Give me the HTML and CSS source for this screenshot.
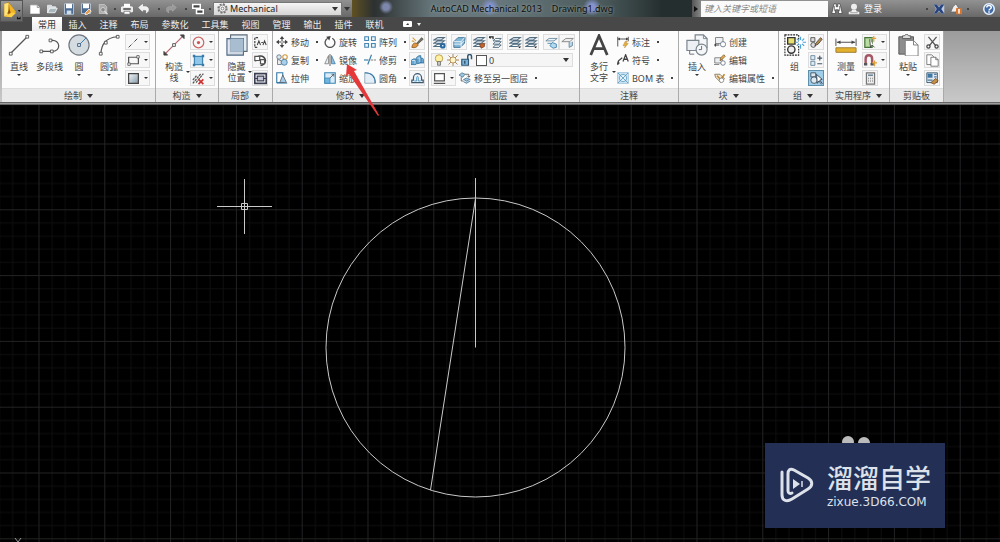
FILE: index.html
```html
<!DOCTYPE html>
<html lang="zh-CN">
<head>
<meta charset="utf-8">
<title>AutoCAD Mechanical 2013 - Drawing1.dwg</title>
<link rel="stylesheet" href="styles.css">
</head>
<body>
<svg class="sprite" aria-hidden="true">
  <symbol id="new" viewBox="0 0 16 16"><path d="M2 3h9l3 3v8H2z" fill="#fff" stroke="#ddd"/><path d="M11 3v3h3" fill="none" stroke="#777"/></symbol>
  <symbol id="open" viewBox="0 0 16 16"><path d="M2 13V3h5l2 2h4v2" fill="#d8dde0" stroke="#eee"/><path d="M2 13l3-6h10l-3 6z" fill="#a8b8bd" stroke="#fff"/></symbol>
  <symbol id="save" viewBox="0 0 16 16"><path d="M2 1h12v14H2z" fill="#496b94" stroke="#c8d8e8"/><path d="M4 1h8v6H4z" fill="#fff"/><path d="M5 10h6v5H5z" fill="#cfdcea"/></symbol>
  <symbol id="saveas" viewBox="0 0 16 16"><path d="M2 1h12v13H2z" fill="#496b94" stroke="#c8d8e8"/><path d="M4 1h8v6H4z" fill="#fff"/><path d="M7 13l5-5 3 3-5 4-3 1z" fill="#e59b4b" stroke="#fff"/></symbol>
  <symbol id="plot" viewBox="0 0 16 16"><path d="M3 2h7l3 3v9H3z" fill="#aaa" stroke="#ccc"/><circle cx="8" cy="9" r="3" fill="#888" stroke="#ddd"/><path d="M10 11l4 4" stroke="#ddd" stroke-width="2"/></symbol>
  <symbol id="print" viewBox="0 0 16 16"><path d="M4 1h8v5H4z" fill="#fff"/><rect x="0" y="5" width="16" height="7" rx="2" fill="#e8e8e8" stroke="#fff"/><path d="M3 8h10" stroke="#444" stroke-width="2"/><path d="M4 11h8v4H4z" fill="#fff" stroke="#666"/></symbol>
  <symbol id="undo" viewBox="0 0 16 16"><path d="M1 6l5-4v3h4c5 0 5 7 1 8 1-3 0-4-2-4H6v2z" fill="#eee" stroke="#fff"/></symbol>
  <symbol id="redo" viewBox="0 0 16 16"><path d="M15 6l-5-4v3H6c-5 0-5 7-1 8-1-3 0-4 2-4h3v2z" fill="#999" stroke="#aaa"/></symbol>
  <symbol id="win" viewBox="0 0 16 16"><path d="M1 2h10v5H1zM6 9h9v5H6z" fill="#444" stroke="#fff" stroke-width="2"/></symbol>
  <symbol id="gear" viewBox="0 0 16 16"><circle cx="8" cy="8" r="6" fill="none" stroke="#777" stroke-width="3" stroke-dasharray="2.700 2"/><circle cx="8" cy="8" r="5" fill="#f4f4f4" stroke="#666"/><circle cx="8" cy="8" r="2" fill="#fff" stroke="#555"/></symbol>
  <symbol id="binoc" viewBox="0 0 16 16"><path d="M4 1h3v4h2V1h3l3 13h-5V9H6v5H1z" fill="#fff" stroke="#444"/><path d="M4.500 4v7M11.500 4v7" stroke="#555"/></symbol>
  <symbol id="user" viewBox="0 0 16 16"><circle cx="8" cy="5" r="4" fill="#eee"/><path d="M5 9v2l-4 1v3h14v-3l-4-1V9z" fill="#eee"/><path d="M3 13h10" stroke="#888"/></symbol>
  <symbol id="exch" viewBox="0 0 16 16"><path d="M1 2h4l3 3 3-3h4v12h-4l-3-3-3 3H1l3-6z" fill="#b6c8e3"/><path d="M1 2h4l3 4 3-4h4l-4 6 4 6h-4l-3-4-3 4H1l4-6z" fill="#29437d"/></symbol>
  <symbol id="a360" viewBox="0 0 16 16"><path d="M1 12l3-7 4-4 3 5-3 6z" fill="#eee" stroke="#666"/><rect x="8" y="7" width="8" height="8" fill="#d8762f"/><path d="M12 8v6" stroke="#fff" stroke-width="2"/></symbol>
  <symbol id="help" viewBox="0 0 16 16"><circle cx="8" cy="8" r="7" fill="#416ba6" stroke="#e8f2ff" stroke-width="2"/><path d="M5 6c0-4 6-3 6 0 0 2-3 2-3 4M8 11v2" fill="none" stroke="#fff" stroke-width="2"/></symbol>

  <symbol id="line" viewBox="0 0 24 24"><path d="M3 21L21 3" stroke="#555" stroke-width="1.3"/><path d="M1.500 20h3v3h-3zM19.500 1.500h3v3h-3z" fill="#fff" stroke="#555"/></symbol>
  <symbol id="pline" viewBox="0 0 24 24"><path d="M2 19h12c11 0 9-13 0-12" fill="none" stroke="#555" stroke-width="1.300"/><path d="M1 17.500h3v3H1zM12.500 17.500h3v3h-3zM11 5.500h3v3h-3z" fill="#fff" stroke="#555"/></symbol>
  <symbol id="circle" viewBox="0 0 24 24"><circle cx="12" cy="12" r="11" fill="#d5dce1" stroke="#707780" stroke-width="1.300"/><path d="M12 12l8-8" stroke="#2f78b3"/><path d="M10.500 10.500h3v3h-3z" fill="#fff" stroke="#357"/></symbol>
  <symbol id="arc" viewBox="0 0 24 24"><path d="M3 22C4 10 9 4 21 3" fill="none" stroke="#555" stroke-width="1.300"/><path d="M1.500 20h3v3h-3zM7 8h3v3H7zM20 1.500h3v3h-3z" fill="#fff" stroke="#555"/></symbol>
  <symbol id="cline" viewBox="0 0 24 24"><path d="M2 22L22 2" stroke="#b56a70" stroke-width="1.400"/><path d="M1 19v4h4zM19 1h4v4z" fill="#444" stroke="#444"/><path d="M10.500 10.500h3v3h-3z" fill="#fff" stroke="#555"/></symbol>
  <symbol id="hide" viewBox="0 0 24 24"><path d="M5 1h18v18H5z" fill="#e4ecf3" stroke="#5c6b78" stroke-width="1.200"/><path d="M1 5h18v18H1z" fill="#bccbd8" fill-opacity=".7" stroke="#4e6780" stroke-width="1.200"/><path d="M5 5h14v14H5z" fill="#a8bed0"/><path d="M3 21V7" stroke="#eef"/></symbol>
  <symbol id="bigA" viewBox="0 0 24 24"><path d="M3 23L12 2l9 21M6 16h12" fill="none" stroke="#444" stroke-width="3"/></symbol>
  <symbol id="insert" viewBox="0 0 24 24"><path d="M10 1h9l4 4v10H10z" fill="#f4f6f8" stroke="#7b858d" stroke-width="1.300"/><path d="M19 1v4h4" fill="none" stroke="#7b858d"/><path d="M1 7h13v11H1z" fill="#edf0f2" stroke="#7b858d" stroke-width="1.300"/><circle cx="17" cy="17" r="6" fill="#f4f6f8" stroke="#7b858d" stroke-width="1.300"/><path d="M17 13v4h-3M4 18v4h5" fill="none" stroke="#667"/></symbol>
  <symbol id="group" viewBox="0 0 24 24"><path d="M1 1h15v22H1z" fill="#fff" stroke="#222" stroke-width="1.200" stroke-dasharray="2 1"/><path d="M4 4h8v7H4z" fill="#e7df70" stroke="#333" stroke-width="1.500"/><circle cx="8" cy="17" r="4" fill="#eee" stroke="#333" stroke-width="1.500"/><path d="M18 3v13M12 9h12M14 5l8 8M22 5l-8 8" stroke="#4aa3dd" stroke-width="1.300"/><circle cx="18" cy="9" r="2.500" fill="#fff"/></symbol>
  <symbol id="measure" viewBox="0 0 24 24"><path d="M1 5v8M23 5v8M2 9h20" stroke="#444" fill="none"/><path d="M2 9l4-2v4zM22 9l-4-2v4z" fill="#444"/><path d="M1 15h22v5H1z" fill="#e4b12d" stroke="#9a7a30"/></symbol>
  <symbol id="paste" viewBox="0 0 24 24"><path d="M2 3h16v19H2z" fill="#8d8d8d" stroke="#555"/><path d="M6 4V2h2c1-2 4-2 5 0h2v3H6z" fill="#ddd" stroke="#555"/><path d="M9 7h9l5 5v12H9z" fill="#fff" stroke="#777"/><path d="M18 7v5h5" fill="none" stroke="#777"/></symbol>

  <symbol id="dash" viewBox="0 0 16 16"><path d="M2 14L14 2" stroke="#444" stroke-width="1.200" stroke-dasharray="5 2 1 2"/></symbol>
  <symbol id="rect" viewBox="0 0 16 16"><path d="M2 4h12v8H2z" fill="none" stroke="#555" stroke-width="1.500"/><path d="M1 11h3v3H1zM12 2h3v3h-3z" fill="#fff" stroke="#555"/></symbol>
  <symbol id="hatch" viewBox="0 0 16 16"><linearGradient id="hg" x2="1" y2="1"><stop stop-color="#f7fafc"/><stop offset="1" stop-color="#8398a8"/></linearGradient><path d="M2 2h12v12H2z" fill="url(#hg)" stroke="#444" stroke-width="1.500"/></symbol>
  <symbol id="ccirc" viewBox="0 0 16 16"><circle cx="8" cy="8" r="6.500" fill="none" stroke="#c66" stroke-width="1.500"/><circle cx="8" cy="8" r="2" fill="#c55"/></symbol>
  <symbol id="cbox" viewBox="0 0 16 16"><path d="M3 3h10v10H3z" fill="#8fc7ea" stroke="#4486b0" stroke-width="1.500"/><path d="M1 1h3v3H1zM12 1h3v3h-3zM1 12h3v3H1zM12 12h3v3h-3z" fill="#357aa8"/></symbol>
  <symbol id="cdel" viewBox="0 0 16 16"><path d="M1 14L11 2M5 13l9-11M1 10l5-6" stroke="#555" stroke-width="1.500" stroke-dasharray="3 1"/><path d="M8 9l6 6M14 9l-6 6" stroke="#c33" stroke-width="2"/></symbol>
  <symbol id="loc1" viewBox="0 0 16 16"><path d="M5 2H1v12h4" fill="none" stroke="#444" stroke-width="1.500" stroke-dasharray="3 1"/><path d="M4 11l2-5 2 5M9 8h2M11 11l2-5 2 5" fill="none" stroke="#444" stroke-width="1.300"/></symbol>
  <symbol id="loc2" viewBox="0 0 16 16"><path d="M2 9a6 6 0 1 1 12-1 6 6 0 0 1-6 6" fill="none" stroke="#444" stroke-width="2"/><path d="M1 3h6v5H1zM8 7h5v5H8z" fill="#fff" stroke="#555" stroke-width="1.500"/></symbol>
  <symbol id="loc3" viewBox="0 0 16 16"><path d="M1 2h14v12H1z" fill="#fff" stroke="#3d4052" stroke-width="2"/><path d="M4 5h8v6H4zM1 8h4M11 8h4" fill="#c8c8d8" stroke="#3d4052" stroke-width="1.500"/></symbol>
  <symbol id="move" viewBox="0 0 16 16"><path d="M8 2v12M2 8h12" stroke="#444" stroke-width="1.500"/><path d="M8 0l3 4H5zM8 16l3-4H5zM0 8l4-3v6zM16 8l-4-3v6z" fill="#444"/><path d="M7 7h2v2H7z" fill="#fff"/></symbol>
  <symbol id="copy" viewBox="0 0 16 16"><circle cx="4" cy="4" r="3" fill="#dbe8f2" stroke="#567"/><circle cx="12" cy="4" r="3" fill="#fff" stroke="#d39a3c" stroke-width="1.500"/><path d="M2 7v7h5V9z" fill="#eee" stroke="#567"/><circle cx="11" cy="11" r="4" fill="#a9cfe9" stroke="#37729e"/></symbol>
  <symbol id="stretch" viewBox="0 0 16 16"><path d="M1 1h8v13H1z" fill="#fff" stroke="#357aa8" stroke-width="1.500"/><path d="M9 4l5 10H5z" fill="#9fcbe8" stroke="#555"/><path d="M1 15h14" stroke="#357aa8"/></symbol>
  <symbol id="rotate" viewBox="0 0 16 16"><path d="M5 3a6.500 6.500 0 1 0 6 0" fill="none" stroke="#555" stroke-width="1.800"/><path d="M3 1l6-1-2 6z" fill="#444"/></symbol>
  <symbol id="mirror" viewBox="0 0 16 16"><path d="M6 2v11H1z" fill="#e9edf0" stroke="#777"/><path d="M10 2v11h5z" fill="#8fbddc" stroke="#357aa8"/><path d="M8 0v16" stroke="#333"/></symbol>
  <symbol id="scale" viewBox="0 0 16 16"><path d="M1 1h14v14H1z" fill="#d9ecf8" stroke="#3d85b6" stroke-width="1.500"/><path d="M1 8h7v7H1z" fill="#74b5df" stroke="#3d85b6"/><path d="M8 8l5-5M10 3h3v3" fill="none" stroke="#444"/></symbol>
  <symbol id="array" viewBox="0 0 16 16"><path d="M1 1h5v5H1zM10 1h5v5h-5zM1 10h5v5H1zM10 10h5v5h-5z" fill="#eaf5fc" stroke="#4886b2" stroke-width="1.500"/></symbol>
  <symbol id="trim" viewBox="0 0 16 16"><path d="M5 14l5-13" stroke="#357aa8" stroke-width="1.500"/><path d="M0 8h6" stroke="#357aa8" stroke-width="1.500"/><path d="M9 8h7" stroke="#555" stroke-dasharray="3 1"/></symbol>
  <symbol id="fillet" viewBox="0 0 16 16"><path d="M1 15V1c9 0 14 5 14 14z" fill="#e3eef6" stroke="#8298a8"/><path d="M1 1c9 0 14 5 14 14" fill="none" stroke="#357aa8" stroke-width="1.500"/></symbol>
  <symbol id="brush" viewBox="0 0 16 16"><path d="M7 9l6-7 2 2-7 6z" fill="#77706a" stroke="#554"/><path d="M1 14c1-5 3-6 6-5l2 2c-2 3-4 4-8 3z" fill="#dd973f" stroke="#8b5928"/><path d="M2 2l4 4M1 6l3 1" stroke="#d7a34b" stroke-width="1.500"/></symbol>
  <symbol id="cloud" viewBox="0 0 16 16"><path d="M0 13V8l3-2h3v7zM7 12V4l3-2h2v9zM12 11V5h2l2 2v4z" fill="#68a8d4" stroke="#2e719f"/><path d="M1 8h4v4M8 5h3v5" fill="none" stroke="#d8effc"/></symbol>
  <symbol id="offset" viewBox="0 0 16 16"><path d="M1 13h14v-3h-2V7a5 5 0 0 0-10 0v3H1z" fill="#edf5fa" stroke="#405b70" stroke-width="1.500"/><path d="M4 11h3V7c0-2 2-2 2 0v4h3" fill="none" stroke="#3b89b7"/></symbol>
  <symbol id="layer" viewBox="0 0 16 16"><path d="M1 13l5-3h8l-4 3zM1 9l5-3h8l-4 3zM1 5l5-3h8l-4 3z" fill="#f6fbff" stroke="#536d80" stroke-width="1.300"/></symbol>
  <symbol id="layerg" viewBox="0 0 16 16"><use href="#layer"/><circle cx="12" cy="12" r="3.500" fill="#2769a0"/><circle cx="12" cy="12" r="1" fill="#fff"/></symbol>
  <symbol id="layerb" viewBox="0 0 16 16"><path d="M1 14V7l5-5h9l-1 7-5 5z" fill="#82b6d7" stroke="#32698b"/><path d="M1 7h9l4-5M1 10h9l4-4M10 7v7" fill="none" stroke="#fff"/></symbol>
  <symbol id="layero" viewBox="0 0 16 16"><use href="#layer"/><path d="M8 10l6-1v4l-4 2z" fill="#c4622d" stroke="#854523"/></symbol>
  <symbol id="layerp" viewBox="0 0 16 16"><path d="M5 14l3-3h7l-3 3zM5 10l3-3h7l-3 3zM5 6l3-3h7l-3 3z" fill="#f6fbff" stroke="#536d80" stroke-width="1.200"/><path d="M0 1h5v3M0 1l2 2" fill="none" stroke="#222" stroke-width="1.500"/></symbol>
  <symbol id="layerm" viewBox="0 0 16 16"><use href="#layer"/><path d="M11 13h4l-2 2z" fill="#222"/></symbol>
  <symbol id="layerf" viewBox="0 0 16 16"><path d="M1 6l4-3h10l-4 3z" fill="#eaf5fb" stroke="#5e8098"/><path d="M3 9h5M9 8l5 2v4l-4 1-4-3z" fill="#b4daee" stroke="#357aa8"/></symbol>
  <symbol id="layert" viewBox="0 0 16 16"><path d="M1 7l5-4h9l-4 4z" fill="#eee" stroke="#777"/><path d="M10 7v7l4-2V7" fill="#bed8e7" stroke="#5a7e95"/></symbol>
  <symbol id="bulb" viewBox="0 0 16 16"><circle cx="8" cy="6" r="5" fill="#fff0a2" stroke="#a78a38"/><path d="M6 10h4v5H6z" fill="#c9c9bd" stroke="#666"/></symbol>
  <symbol id="sun" viewBox="0 0 16 16"><path d="M8 0v16M0 8h16M2 2l12 12M14 2L2 14" stroke="#a4804a" stroke-width="1.200"/><circle cx="8" cy="8" r="4" fill="#fff4c7" stroke="#a4804a"/></symbol>
  <symbol id="lock" viewBox="0 0 16 16"><path d="M1 7h9v8H1z" fill="#7fb3da" stroke="#315875" stroke-width="1.500"/><path d="M9 7V3c0-3 5-3 5 0v4" fill="none" stroke="#315875" stroke-width="2"/><path d="M5 9v4" stroke="#315875" stroke-width="2"/></symbol>
  <symbol id="shape" viewBox="0 0 16 16"><path d="M2 2h12v9H2z" fill="#fff" stroke="#555" stroke-width="1.500"/><path d="M1 14h14" stroke="#555" stroke-width="1.500"/></symbol>
  <symbol id="tolayer" viewBox="0 0 16 16"><path d="M0 4l4-3 4 2-3 4zM6 10l4-2 5 2-5 2zM6 13l4 2 5-3" fill="#98c7e5" stroke="#4d7085"/><path d="M8 3h5v4M11 5l2 2 2-2M3 7v5h3" fill="none" stroke="#444"/></symbol>
  <symbol id="dim" viewBox="0 0 16 16"><path d="M1 1v13M15 1v6M1 4h14" fill="none" stroke="#555" stroke-width="1.300"/><path d="M1 4l3-2v4zM15 4l-3-2v4z" fill="#444"/><path d="M11 7l-3 6h3l-1 3 5-6h-3l2-3z" fill="#e7af39" stroke="#aa7524" stroke-width=".5"/></symbol>
  <symbol id="sym" viewBox="0 0 16 16"><path d="M1 14l1-5 5-4M8 10l3.500-9L15 10M9 7h5" fill="none" stroke="#444" stroke-width="1.700"/><path d="M0 15l1-5 3 2z" fill="#444"/></symbol>
  <symbol id="bom" viewBox="0 0 16 16"><path d="M1 1h14v14H1z" fill="#e3f1fa" stroke="#79aecd"/><circle cx="8" cy="8" r="5" fill="none" stroke="#4c91bc"/><path d="M1 1l14 14M15 1L1 15" stroke="#4c91bc"/></symbol>
  <symbol id="bcreate" viewBox="0 0 16 16"><path d="M2 2h10v8H2z" fill="#eef1f3" stroke="#666"/><path d="M0 12h7M2 10v4" stroke="#444" stroke-width="1.500"/><circle cx="12" cy="11" r="3.500" fill="#fff" stroke="#567"/></symbol>
  <symbol id="bedit" viewBox="0 0 16 16"><path d="M1 5h10v7H1zM0 14h7" fill="#edf0f2" stroke="#666"/><circle cx="12" cy="12" r="3" fill="#fff" stroke="#567"/><path d="M8 9l1-4 4-4 2 2-4 4z" fill="#e4ae52" stroke="#80551c"/></symbol>
  <symbol id="battr" viewBox="0 0 16 16"><path d="M1 3h7l6 6-5 5-7-7z" fill="#ece7d5" stroke="#75643c"/><path d="M4 5l5 5 5-7" fill="none" stroke="#c1832d" stroke-width="2"/><circle cx="10" cy="11" r="3" fill="#fff" stroke="#777"/></symbol>
  <symbol id="gedit" viewBox="0 0 16 16"><path d="M1 2h5v5H1z" fill="#ddd" stroke="#444"/><circle cx="4" cy="11" r="3" fill="#ddd" stroke="#444"/><path d="M7 9l6-7 2 2-5 6-4 2z" fill="#b58c4e" stroke="#444"/></symbol>
  <symbol id="gadd" viewBox="0 0 16 16"><path d="M1 2h5v5H1zM1 9h5v5H1z" fill="#dceaf3" stroke="#5f7d92"/><path d="M9 5h6M12 2v6M9 12h6" stroke="#456" stroke-width="1.500"/></symbol>
  <symbol id="gsel" viewBox="0 0 16 16"><path d="M1 1h6v5H1z" fill="#dce8ed" stroke="#345"/><circle cx="5" cy="10" r="4" fill="#dce8ed" stroke="#345"/><path d="M8 3l1 11 2-3 3 4 1-1-3-4 3-1z" fill="#fff" stroke="#234"/></symbol>
  <symbol id="qsel" viewBox="0 0 16 16"><path d="M1 2h9v12H1z" fill="#b9dda0" stroke="#49723a" stroke-width="1.500"/><path d="M7 4l1 10 2-3 3 3" fill="#fff" stroke="#333"/><path d="M12 0v7M9 3h6" stroke="#e0a33d" stroke-width="1.500"/></symbol>
  <symbol id="magnet" viewBox="0 0 16 16"><path d="M2 12V6c0-6 8-6 8 0v6" fill="none" stroke="#a45765" stroke-width="3"/><path d="M0 11h4v3H0zM8 11h4v3H8z" fill="#555"/><path d="M13 8v7M10 11h6" stroke="#dda43d" stroke-width="1.500"/></symbol>
  <symbol id="calc" viewBox="0 0 16 16"><path d="M3 1h10v14H3z" fill="#eee" stroke="#777" stroke-width="1.500"/><path d="M5 4h6" stroke="#6b8799" stroke-width="2"/><path d="M5 8h6M5 11h6" stroke="#888" stroke-width="2" stroke-dasharray="1 1.500"/></symbol>
  <symbol id="cut" viewBox="0 0 16 16"><path d="M3 1l9 11M13 1L4 12" stroke="#555" stroke-width="1.500"/><circle cx="3" cy="13" r="2" fill="none" stroke="#444" stroke-width="1.500"/><circle cx="13" cy="13" r="2" fill="none" stroke="#444" stroke-width="1.500"/></symbol>
  <symbol id="copyc" viewBox="0 0 16 16"><path d="M1 1h6l3 3v9H1z" fill="#fff" stroke="#666"/><path d="M6 4h6l3 3v8H6z" fill="#fff" stroke="#666"/><path d="M12 4v3h3" fill="none" stroke="#666"/></symbol>
  <symbol id="match" viewBox="0 0 16 16"><path d="M1 1h13v12H1z" fill="#dfe8ef" stroke="#27465f"/><path d="M2 2h6v5H2z" fill="#3e76a6"/><path d="M10 3h3M10 6h3M2 10h6" stroke="#4f789a" stroke-width="1.500"/><path d="M6 13l6-5 3 3-5 4z" fill="#c6904a" stroke="#754c21"/></symbol>
</svg>

<header class="titlebar">
  <button class="app" aria-label="应用程序菜单"><svg viewBox="0 0 22 22"><path d="M3 3l5-2 8 12-6 5-7-1z" fill="#b57812"/><path d="M3 3l5-1-1 13-4 2z" fill="#ffe47a"/><path d="M8 2l8 10-6 3z" fill="#f1b424"/><path d="M3 17l8-4 5 0-5 5z" fill="#ffcf43"/><path d="M9 9l1 4-4 1z" fill="#8f5510"/><path d="M18 10h3l-1.500 2zM17 20v-3l2 2 2-2v3" fill="#111"/></svg></button>
  <nav class="quick" aria-label="快速访问工具栏">
    <button aria-label="新建"><svg><use href="#new"/></svg></button>
    <button aria-label="打开"><svg><use href="#open"/></svg></button>
    <button aria-label="保存"><svg><use href="#save"/></svg></button>
    <button aria-label="另存为"><svg><use href="#saveas"/></svg></button>
    <button class="drop" aria-label="预览"><svg><use href="#plot"/></svg></button>
    <button aria-label="打印"><svg><use href="#print"/></svg></button>
    <button class="drop far" aria-label="放弃"><svg><use href="#undo"/></svg></button>
    <button class="drop far" aria-label="重做"><svg><use href="#redo"/></svg></button>
    <button class="drop" aria-label="窗口"><svg><use href="#win"/></svg></button>
  </nav>
  <label class="workspace" aria-label="工作空间"><svg><use href="#gear"/></svg><select><option>Mechanical</option></select><i class="caret"></i></label>
  <button class="more" aria-label="自定义"><i class="caret"></i></button>
  <h1 class="doc"><span>AutoCAD Mechanical 2013</span><span>Drawing1.dwg</span></h1>
  <button class="expand" aria-label="展开搜索"></button>
  <input class="search" type="text" placeholder="键入关键字或短语" aria-label="搜索">
  <div class="account">
    <button aria-label="搜索"><svg><use href="#binoc"/></svg></button>
    <button class="login"><svg><use href="#user"/></svg>登录</button>
    <span class="dot push"></span>
    <button aria-label="Exchange"><svg><use href="#exch"/></svg></button>
    <button class="drop" aria-label="Autodesk 360"><svg><use href="#a360"/></svg></button>
    <button class="help" aria-label="帮助"><svg><use href="#help"/></svg></button>
  </div>
</header>

<nav class="tabs">
  <button class="on">常用</button><button>插入</button><button>注释</button><button>布局</button><button class="wide">参数化</button><button class="wide">工具集</button><button>视图</button><button>管理</button><button>输出</button><button>插件</button><button>联机</button>
  <button class="mini" aria-label="最小化功能区"><svg viewBox="0 0 18 8"><rect x="0" y="1" width="9" height="6" rx="1" fill="#fff"/><path d="M3 5l2-2 1 2z" fill="#333"/><path d="M14 3h4l-2 3z" fill="#eee"/></svg></button>
</nav>

<main class="ribbon">
  <section class="panel p-draw">
    <div class="body">
      <button class="big"><svg><use href="#line"/></svg>直线<i></i></button>
      <button class="big"><svg><use href="#pline"/></svg>多段线</button>
      <button class="big"><svg><use href="#circle"/></svg>圆<i></i></button>
      <button class="big"><svg><use href="#arc"/></svg>圆弧<i></i></button>
      <div class="stack">
        <button class="box split" aria-label="构造线型"><svg><use href="#dash"/></svg></button>
        <button class="box split" aria-label="矩形"><svg><use href="#rect"/></svg></button>
        <button class="box split" aria-label="图案填充"><svg><use href="#hatch"/></svg></button>
      </div>
    </div>
    <h2>绘制<i class="caret"></i></h2>
  </section>
  <section class="panel p-cons">
    <div class="body">
      <button class="big two"><svg><use href="#cline"/></svg>构造<br>线<i></i></button>
      <div class="stack">
        <button class="box split" aria-label="构造圆"><svg><use href="#ccirc"/></svg></button>
        <button class="box split" aria-label="自动构造线"><svg><use href="#cbox"/></svg></button>
        <button class="box split" aria-label="删除构造线"><svg><use href="#cdel"/></svg></button>
      </div>
    </div>
    <h2>构造<i class="caret"></i></h2>
  </section>
  <section class="panel p-local">
    <div class="body">
      <button class="big two"><svg><use href="#hide"/></svg>隐藏<br>位置<i></i></button>
      <div class="stack">
        <button class="box" aria-label="局部视图"><svg><use href="#loc1"/></svg></button>
        <button class="box" aria-label="局部旋转"><svg><use href="#loc2"/></svg></button>
        <button class="box" aria-label="局部边框"><svg><use href="#loc3"/></svg></button>
      </div>
    </div>
    <h2>局部<i class="caret"></i></h2>
  </section>
  <section class="panel p-modify">
    <div class="body">
      <div class="stack">
        <button class="row drop"><svg><use href="#move"/></svg>移动</button>
        <button class="row drop"><svg><use href="#copy"/></svg>复制</button>
        <button class="row"><svg><use href="#stretch"/></svg>拉伸</button>
      </div>
      <div class="stack">
        <button class="row"><svg><use href="#rotate"/></svg>旋转</button>
        <button class="row"><svg><use href="#mirror"/></svg>镜像</button>
        <button class="row"><svg><use href="#scale"/></svg>缩放</button>
      </div>
      <div class="stack">
        <button class="row drop"><svg><use href="#array"/></svg>阵列</button>
        <button class="row drop"><svg><use href="#trim"/></svg>修剪</button>
        <button class="row drop"><svg><use href="#fillet"/></svg>圆角</button>
      </div>
      <div class="stack">
        <button class="box" aria-label="删除"><svg><use href="#brush"/></svg></button>
        <button class="box" aria-label="分解"><svg><use href="#cloud"/></svg></button>
        <button class="box" aria-label="偏移"><svg><use href="#offset"/></svg></button>
      </div>
    </div>
    <h2>修改<i class="caret"></i></h2>
  </section>
  <section class="panel p-layer">
    <div class="body">
      <div class="stack">
        <div class="tools">
          <button class="box" aria-label="图层特性"><svg><use href="#layerg"/></svg></button>
          <button class="box" aria-label="图层状态"><svg><use href="#layerb"/></svg></button>
          <div class="pair"><button class="box" aria-label="置为当前"><svg><use href="#layero"/></svg></button><button class="box" aria-label="上一个图层"><svg><use href="#layerp"/></svg></button></div>
          <div class="pair"><button class="box" aria-label="隔离"><svg><use href="#layerm"/></svg></button><button class="box" aria-label="取消隔离"><svg><use href="#layerm"/></svg></button></div>
          <div class="pair"><button class="box" aria-label="冻结"><svg><use href="#layerf"/></svg></button><button class="box" aria-label="关闭"><svg><use href="#layert"/></svg></button></div>
        </div>
        <label class="combo" aria-label="图层"><svg><use href="#bulb"/></svg><svg><use href="#sun"/></svg><svg><use href="#lock"/></svg><b></b><select><option>0</option></select><i class="caret"></i></label>
        <div class="tools low">
          <button class="box split" aria-label="图层样式"><svg><use href="#shape"/></svg></button>
          <button class="row drop"><svg><use href="#tolayer"/></svg>移至另一图层</button>
        </div>
      </div>
    </div>
    <h2>图层<i class="caret"></i></h2>
  </section>
  <section class="panel p-note">
    <div class="body">
      <button class="big two"><svg><use href="#bigA"/></svg>多行<br>文字<i></i></button>
      <div class="stack">
        <button class="row drop"><svg><use href="#dim"/></svg>标注</button>
        <button class="row drop"><svg><use href="#sym"/></svg>符号</button>
        <button class="row drop"><svg><use href="#bom"/></svg>BOM 表</button>
      </div>
    </div>
    <h2>注释</h2>
  </section>
  <section class="panel p-block">
    <div class="body">
      <button class="big"><svg><use href="#insert"/></svg>插入<i></i></button>
      <div class="stack">
        <button class="row"><svg><use href="#bcreate"/></svg>创建</button>
        <button class="row"><svg><use href="#bedit"/></svg>编辑</button>
        <button class="row drop"><svg><use href="#battr"/></svg>编辑属性</button>
      </div>
    </div>
    <h2>块<i class="caret"></i></h2>
  </section>
  <section class="panel p-group">
    <div class="body">
      <button class="big"><svg><use href="#group"/></svg>组</button>
      <div class="stack">
        <button class="box" aria-label="组编辑"><svg><use href="#gedit"/></svg></button>
        <button class="box" aria-label="添加到组"><svg><use href="#gadd"/></svg></button>
        <button class="box pressed" aria-label="组选择"><svg><use href="#gsel"/></svg></button>
      </div>
    </div>
    <h2>组<i class="caret"></i></h2>
  </section>
  <section class="panel p-util">
    <div class="body">
      <button class="big"><svg><use href="#measure"/></svg>测量<i></i></button>
      <div class="stack">
        <button class="box split" aria-label="快速选择"><svg><use href="#qsel"/></svg></button>
        <button class="box split" aria-label="对象捕捉"><svg><use href="#magnet"/></svg></button>
        <button class="box" aria-label="计算器"><svg><use href="#calc"/></svg></button>
      </div>
    </div>
    <h2>实用程序<i class="caret"></i></h2>
  </section>
  <section class="panel p-clip">
    <div class="body">
      <button class="big"><svg><use href="#paste"/></svg>粘贴<i></i></button>
      <div class="stack">
        <button class="box" aria-label="剪切"><svg><use href="#cut"/></svg></button>
        <button class="box" aria-label="复制到剪贴板"><svg><use href="#copyc"/></svg></button>
        <button class="box" aria-label="特性匹配"><svg><use href="#match"/></svg></button>
      </div>
    </div>
    <h2>剪贴板</h2>
  </section>
  <svg class="pointer" viewBox="0 0 36 56"><path d="M2 2l-1 12 3-2 29 42 1-1L9 9l3-1z" fill="#e5383b"/></svg>
</main>

<section class="canvas">
  <svg class="drawing" aria-label="图形">
    <defs>
      <pattern id="grid" x="38.500" y="38.500" width="65.800" height="65.800" patternUnits="userSpaceOnUse">
        <path d="M13.660 0v66M26.820 0v66M39.980 0v66M53.140 0v66M0 13.660h66M0 26.820h66M0 39.980h66M0 53.140h66" stroke="#0e0e0f"/>
        <path d="M.5 0v66M0 .5h66" stroke="#232325"/>
      </pattern>
    </defs>
    <rect width="100%" height="100%" fill="url(#grid)"/>
    <g fill="none" stroke="#c9c9c9">
      <circle cx="475.500" cy="242.500" r="149.500"/>
      <path d="M475.500 73v169.500M475.500 93.500L430.500 385"/>
      <path d="M217 101.500h55M244.500 74v55M241.500 98.500h6v6h-6z"/>
      <path d="M15 433l3 4 3-4M18 437v4" stroke="#999"/>
    </g>
    <circle cx="848" cy="337" r="6" fill="#bbb"/><circle cx="864" cy="338" r="6" fill="#bbb"/>
  </svg>
  <aside class="brand">
    <svg viewBox="0 0 36 38"><g fill="none" stroke="#dde1ea" stroke-linecap="round" stroke-linejoin="round"><path d="M3 6v23c0 6 5 7 10 4l16-10c5-3 5-8 0-11L15 4c-4-2-6 0-6 4v17c0 2 2 3 4 2" stroke-width="3"/></g><path d="M14 13l7 5-7 5z" fill="#dde1ea"/><path d="M23 15v6" stroke="#dde1ea" stroke-width="1.500"/></svg>
    <div><strong>溜溜自学</strong><span>zixue.3D66.COM</span></div>
  </aside>
</section>
</body>
</html>
```
FILE: styles.css
```css
* { box-sizing: border-box; }

body {
  margin: 0;
  height: 100vh;
  display: flex;
  flex-direction: column;
  overflow: hidden;
  background: #000;
  color: #444;
  font: 9px/11px "Noto Sans", "Noto Sans CJK SC", sans-serif;
}

button, select, input {
  margin: 0;
  padding: 0;
  border: 0;
  background: none;
  color: inherit;
  font: inherit;
}

h1, h2 { margin: 0; font: inherit; }
svg { display: block; flex: none; }
.sprite { position: absolute; width: 0; height: 0; }

.caret {
  width: 0;
  height: 0;
  border: 3px solid transparent;
  border-top: 4px solid #333;
  border-bottom: 0;
}

/* title bar */
.titlebar {
  position: relative;
  z-index: 2;
  display: flex;
  align-items: center;
  height: 17px;
  padding-left: 29px;
  background: linear-gradient(#929292, #686868);
}
.titlebar button { display: flex; align-items: center; }
.titlebar button svg { width: 12px; height: 12px; }
.titlebar .app {
  position: absolute;
  left: 0;
  top: 0;
  width: 23px;
  height: 22px;
  border: 1px solid #555;
  background: linear-gradient(#999, #666);
}
.titlebar .app svg { width: 21px; height: 20px; }
.quick { display: flex; gap: 5px; width: 184px; }
.drop::after, .dot {
  content: "";
  width: 2px;
  height: 2px;
  margin-left: 5px;
  background: #444;
}
.quick .far::after { margin-left: 8px; }
.workspace {
  display: flex;
  align-items: center;
  gap: 2px;
  width: 129px;
  height: 14px;
  padding: 0 3px;
  border: 1px solid #777;
  background: linear-gradient(#f5f5f5, #d5d5d5);
  color: #222;
}
.workspace svg { width: 11px; height: 11px; }
.workspace select, .combo select { flex: 1; min-width: 0; appearance: none; outline: 0; }
.more { width: 10px; justify-content: center; }
.doc {
  flex: 1;
  align-self: stretch;
  display: flex;
  justify-content: center;
  gap: 10px;
  background:
    radial-gradient(circle at 34px 7px, #7d87ab 0 3px, transparent 7px),
    radial-gradient(circle at 138px 7px, #8391cc 0 3px, transparent 9px),
    radial-gradient(circle at 240px 7px, #8391cc 0 3px, transparent 9px),
    linear-gradient(90deg, #5f5121, #2c3030 22px, #66767a 80px, #66767a 150px, #4b5a5b 250px, #252e2f 310px);
  color: #0b0d0d;
  line-height: 17px;
  white-space: nowrap;
  text-shadow: 0 0 3px #a5b0b0;
}
.expand {
  width: 9px;
  height: 17px;
  background: linear-gradient(90deg, #555, #888);
}
.expand::after {
  content: "";
  margin-left: 2px;
  border: 3px solid transparent;
  border-left: 4px solid #111;
  border-right: 0;
}
.search {
  width: 127px;
  height: 16px;
  padding-left: 3px;
  background: #fafafa;
  font-style: italic;
}
.search::placeholder { color: #888; opacity: 1; }
.account {
  display: flex;
  align-items: center;
  gap: 5px;
  width: 172px;
  padding: 0 5px 0 3px;
  color: #fff;
}
.account .login { gap: 4px; }
.account .push { margin-left: auto; }
.account .help { margin-left: 9px; }

/* ribbon tabs */
.tabs {
  display: flex;
  height: 14px;
  padding-left: 32px;
  background: #484848;
  color: #ececec;
}
.tabs button { width: 31px; text-align: center; }
.tabs .wide { width: 40px; }
.tabs .on { width: 30px; background: linear-gradient(#fff, #ececec); color: #333; }
.tabs .mini { display: flex; align-items: center; justify-content: flex-end; }
.tabs .mini svg { width: 18px; height: 8px; }

/* ribbon */
.ribbon {
  position: relative;
  z-index: 1;
  display: flex;
  padding-left: 2px;
  border-bottom: 3px double #666;
  background: linear-gradient(#9b9b9b, #c8c8c8);
}
.panel {
  display: flex;
  flex-direction: column;
  border-right: 1px solid #aaa;
  background: #fcfcfc;
}
.body { display: grid; align-items: start; padding: 2px 2px 1px; }
.panel h2 {
  display: flex;
  align-items: center;
  justify-content: center;
  gap: 5px;
  height: 14px;
  background: #e9e9e9;
  border-top: 1px solid #ddd;
}
.p-draw .body { grid-template-columns: 30px 31px 28px 32px 28px; }
.p-cons .body { grid-template-columns: 32px 26px; }
.p-local .body { grid-template-columns: 31px 18px; }
.p-modify .body { grid-template-columns: 48px 40px 46px 17px; }
.p-layer .body { grid-template-columns: 146px; }
.p-note .body { grid-template-columns: 34px 60px; }
.p-block .body { grid-template-columns: 32px 63px; }
.p-group .body { grid-template-columns: 27px 17px; }
.p-util .body { grid-template-columns: 32px 25px; }
.p-clip .body { grid-template-columns: 32px 17px; }

.stack {
  display: grid;
  grid-template-rows: repeat(3, 18px);
  align-items: center;
  justify-items: start;
}
.big {
  display: block;
  position: relative;
  padding-top: 1px;
  line-height: 11px;
  text-align: center;
  white-space: nowrap;
}
.big svg { width: 22px; height: 22px; margin: 0 auto 5px; }
.big i, .box.split::after {
  width: 0;
  height: 0;
  border: 2px solid transparent;
  border-top: 2px solid #333;
  border-bottom: 0;
}
.big i { display: block; margin: 2px auto 0; }
.big.two i { position: absolute; right: 0; bottom: 10px; }
.box {
  display: flex;
  align-items: center;
  justify-content: center;
  width: 16px;
  height: 16px;
  border: 1px solid #ddd;
  background: #f7f7f7;
}
.box svg { width: 13px; height: 13px; }
.box.split { width: 25px; justify-content: flex-start; gap: 4px; padding-left: 1px; }
.box.split::after { content: ""; }
.pressed { background: #9fcdea; border-color: #5f8fab; }
.row {
  display: flex;
  align-items: center;
  height: 16px;
  padding-left: 1px;
  white-space: nowrap;
}
.row svg { width: 12px; height: 12px; margin-right: 3px; }
.row.drop::after { margin-left: 7px; }
.tools { display: flex; justify-content: space-between; width: 144px; }
.tools.low { justify-content: flex-start; gap: 2px; }
.pair { display: flex; }
.combo {
  display: flex;
  align-items: center;
  gap: 2px;
  width: 142px;
  height: 14px;
  padding: 0 3px 0 1px;
  border: 1px solid #ddd;
  background: #f5f5f5;
}
.combo svg { width: 12px; height: 12px; }
.combo b { width: 11px; height: 11px; margin-left: 1px; border: 1px solid #555; background: #fff; }
.pointer {
  position: absolute;
  left: 345px;
  top: 31px;
  width: 36px;
  height: 56px;
}

/* drawing area */
.canvas { position: relative; flex: 1; min-height: 0; background: #000; }
.drawing { width: 100%; height: 100%; }
.brand {
  position: absolute;
  right: 55px;
  bottom: 14px;
  display: flex;
  align-items: center;
  gap: 12px;
  padding: 16px 14px 18px;
  background: #232f55;
  color: #dde1ea;
}
.brand svg { width: 36px; height: 38px; }
.brand div { display: flex; flex-direction: column; white-space: nowrap; }
.brand strong { font: 500 26px/36px "Noto Sans CJK SC", sans-serif; }
.brand span { font: 12px/15px "DejaVu Sans", sans-serif; }
```
